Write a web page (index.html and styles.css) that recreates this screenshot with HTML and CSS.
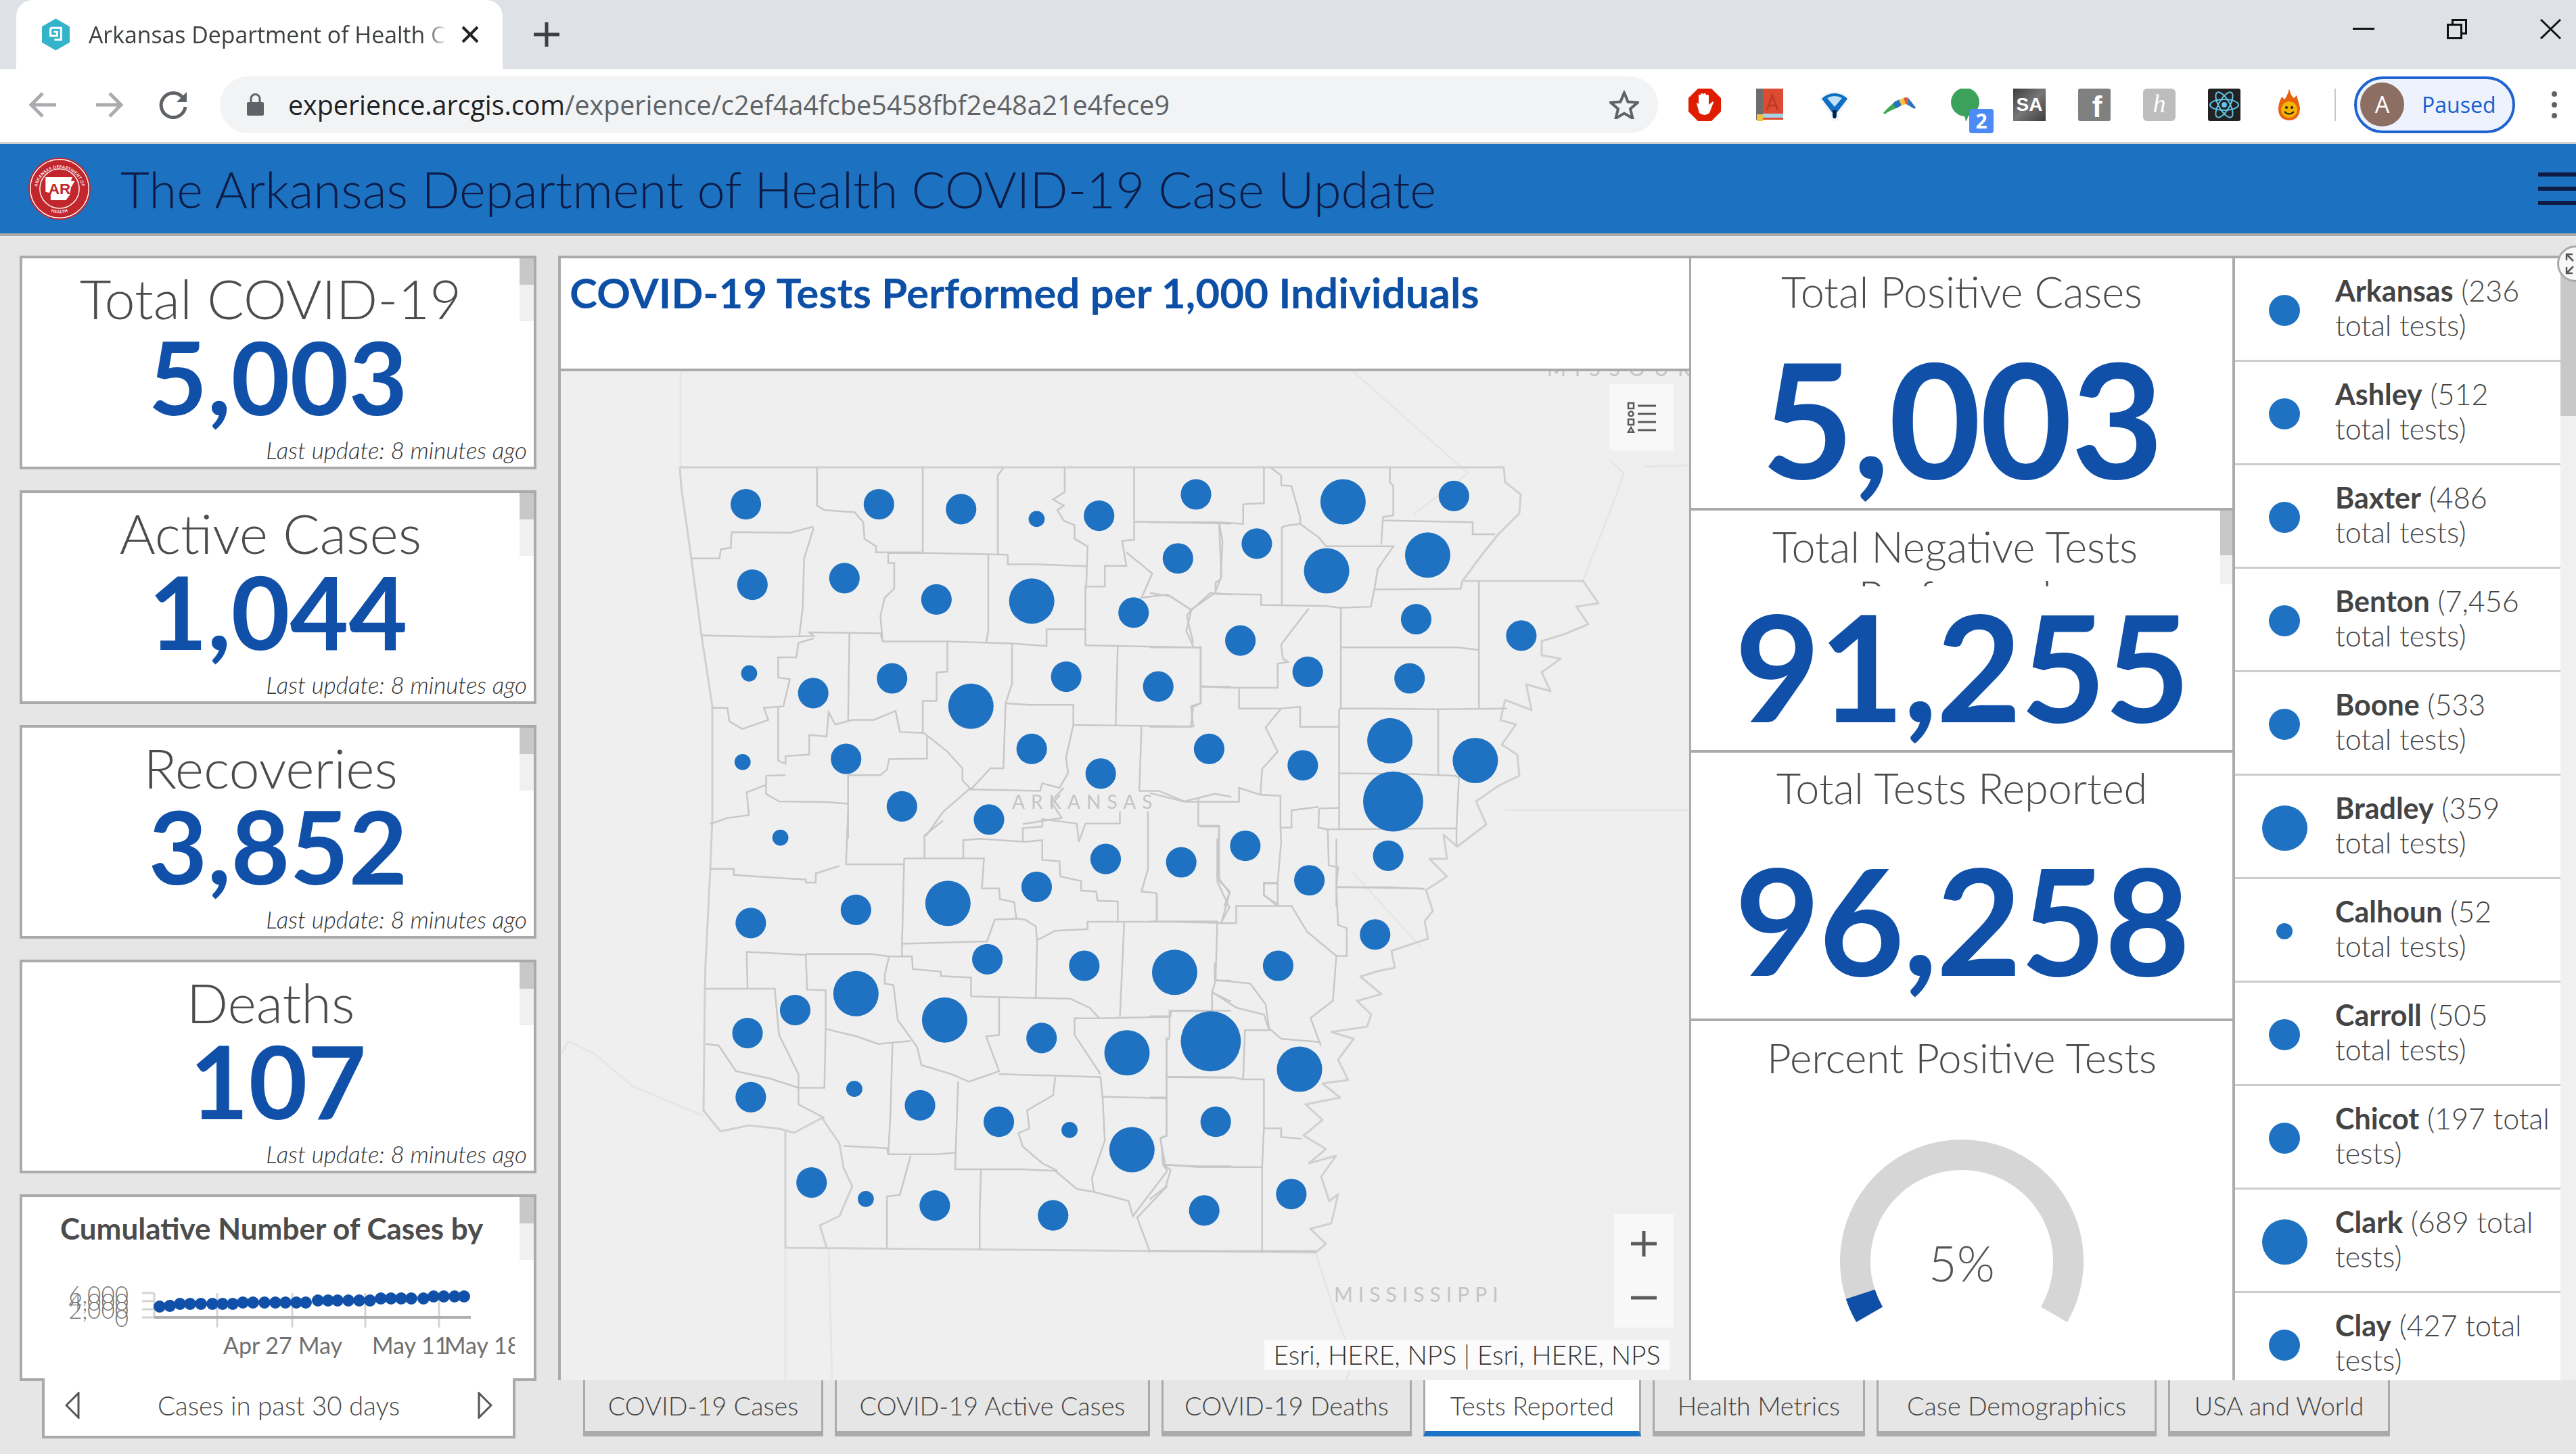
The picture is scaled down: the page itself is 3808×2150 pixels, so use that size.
FILE: index.html
```html
<!DOCTYPE html>
<html lang="en">
<head>
    <meta charset="UTF-8">
    <title>Arkansas Department of Health COVID-19</title>
    <link rel="stylesheet" href="styles.css">
</head>
<body>
    <!-- browser tab strip -->
    <div class="tabstrip">
        <div class="browser-tab">
            <svg class="favicon" viewBox="0 0 44 48"><path d="M22 0 L43 12 V36 L22 48 L1 36 V12 Z" fill="#35b3c9"/><path d="M14 14 H30 V32 H20 M14 14 V26 H24 V20 H19" fill="none" stroke="#fff" stroke-width="3"/></svg>
            <span class="tab-title">Arkansas Department of Health COVID-19</span>
            <svg class="tab-close" viewBox="0 0 28 26"><path d="M3 2 L25 24 M25 2 L3 24" stroke="#202124" stroke-width="4"/></svg>
        </div>
        <svg class="new-tab" viewBox="0 0 38 36"><path d="M19 0 V36 M0 18 H38" stroke="#3c4043" stroke-width="5"/></svg>
        <div class="window-btns">
            <svg class="win-min" viewBox="0 0 32 4"><rect width="32" height="3" fill="#111"/></svg>
            <svg class="win-restore" viewBox="0 0 30 30"><path d="M1.5 8.5 H21.5 V28.5 H1.5 Z M8.5 8 V1.5 H28.5 V21.5 H22" fill="none" stroke="#111" stroke-width="3"/></svg>
            <svg class="win-close" viewBox="0 0 31 30"><path d="M1 1 L30 29 M30 1 L1 29" stroke="#111" stroke-width="3"/></svg>
        </div>
    </div>

    <!-- browser toolbar -->
    <div class="toolbar">
        <svg class="nav-btn back" viewBox="0 0 42 42"><path d="M40 21 H4 M20 4 L3 21 L20 38" fill="none" stroke="#a9abae" stroke-width="5"/></svg>
        <svg class="nav-btn forward" viewBox="0 0 42 42"><path d="M2 21 H38 M22 4 L39 21 L22 38" fill="none" stroke="#a9abae" stroke-width="5"/></svg>
        <svg class="nav-btn reload" viewBox="0 0 46 42"><path d="M36 10 A18 18 0 1 0 40 24" fill="none" stroke="#5f6368" stroke-width="5"/><path d="M42 2 V17 H27 Z" fill="#5f6368"/></svg>
        <div class="omnibox">
            <svg class="lock" viewBox="0 0 25 33"><path d="M6 14 V8 A6.5 6.5 0 0 1 19 8 V14" fill="none" stroke="#5f6368" stroke-width="3"/><rect y="13" width="25" height="20" rx="2" fill="#5f6368"/></svg>
            <span class="url"><b>experience.arcgis.com</b>/experience/c2ef4a4fcbe5458fbf2e48a21e4fece9</span>
            <svg class="star" viewBox="0 0 44 42"><path d="M22 3 L27.500 16.500 L42 17.500 L31 27 L34.500 41 L22 33.500 L9.500 41 L13 27 L2 17.500 L16.500 16.500 Z" fill="none" stroke="#5f6368" stroke-width="4"/></svg>
        </div>
        <div class="extensions">
            <svg class="ext" viewBox="0 0 48 48"><path d="M14 0 H34 L48 14 V34 L34 48 H14 L0 34 V14 Z" fill="#e01c00"/><path d="M16 36 L12 22 Q13 20 15 23 V10 Q17 8 18 10 V8 Q20 6 22 8 V8 Q24 6 26 8 V10 Q28 8 30 10 V24 L36 19 Q38 20 36 23 L31 36 Q24 42 16 36 Z" fill="#fff"/></svg>
            <svg class="ext" viewBox="0 0 48 48"><rect x="4" y="0" width="40" height="46" fill="#dd4b32"/><rect x="4" y="0" width="10" height="46" fill="#6d6d6d"/><path d="M20 32 L28 10 L36 32 M23 25 H33" fill="none" stroke="#c03a26" stroke-width="3"/><rect x="14" y="37" width="30" height="6" fill="#a6d4e6"/><rect x="5" y="38" width="9" height="10" fill="#f0c040"/></svg>
            <svg class="ext" viewBox="0 0 48 48"><path d="M24 48 Q16 48 18 38 L1 15 Q10 4 24 4 Q38 4 47 15 L30 38 Q32 48 24 48 Z" fill="#f4f4f4"/><path d="M24 44 Q20 44 21 36 L5 15 Q13 7 24 7 Q35 7 43 15 L27 36 Q28 44 24 44 Z" fill="#0f6fc4"/><path d="M13 14 Q24 8 35 14 L24 27 Z" fill="#bfe3f5"/><path d="M21 32 H27 L26 44 H22 Z" fill="#08203f"/></svg>
            <svg class="ext" viewBox="0 0 48 48"><path d="M0 36 Q10 24 18 20 L22 28 Q10 32 2 38 Z" fill="#3fa757"/><path d="M14 22 Q18 18 24 16 L27 25 L19 29 Z" fill="#2a72bd"/><path d="M23 17 L30 14 L33 23 L27 25 Z" fill="#f5c33b"/><path d="M30 14 Q34 12 37 14 L36 24 L33 23 Z" fill="#df5a3a"/><path d="M37 14 L48 28 L46 30 L36 24 Z" fill="#2a72bd"/></svg>
            <div class="ext chat-ext">
                <svg viewBox="0 0 48 48"><circle cx="25" cy="20" r="21" fill="#3ba15b"/><path d="M23 36 H31 L27 48 H26 Z" fill="#3ba15b"/></svg>
                <span class="ext-badge">2</span>
            </div>
            <span class="ext ext-sa">SA</span>
            <span class="ext ext-fb">f</span>
            <span class="ext ext-h">h</span>
            <svg class="ext" viewBox="0 0 48 48"><rect width="48" height="48" rx="3" fill="#222"/><g fill="none" stroke="#61c3e8" stroke-width="2"><ellipse cx="24" cy="24" rx="21" ry="8"/><ellipse cx="24" cy="24" rx="21" ry="8" transform="rotate(60 24 24)"/><ellipse cx="24" cy="24" rx="21" ry="8" transform="rotate(120 24 24)"/></g><circle cx="24" cy="24" r="4" fill="#61c3e8"/></svg>
            <svg class="ext" viewBox="0 0 48 48"><path d="M24 0 Q26 10 31 14 L35 10 Q38 20 40 28 Q40 46 24 47 Q8 46 8 30 Q8 22 13 12 L17 16 Q22 10 24 0 Z" fill="#e8620e"/><circle cx="24" cy="31" r="12" fill="#f5b400"/><circle cx="20" cy="28" r="2" fill="#222"/><circle cx="28" cy="28" r="2" fill="#222"/><path d="M17 34 Q24 41 31 34" fill="none" stroke="#222" stroke-width="2"/></svg>
        </div>
        <div class="toolbar-sep"></div>
        <div class="profile">
            <span class="avatar">A</span>
            <span>Paused</span>
        </div>
        <div class="kebab"><i></i><i></i><i></i></div>
    </div>

    <!-- app header -->
    <header class="app-header">
        <svg class="seal" viewBox="0 0 100 100">
            <circle cx="50" cy="50" r="49" fill="#c1272d"/>
            <circle cx="50" cy="50" r="46" fill="none" stroke="#fff" stroke-width="1.500"/>
            <circle cx="50" cy="50" r="31" fill="none" stroke="#fff" stroke-width="1.500"/>
            <path id="sealArc" d="M14 54 A36 36 0 0 1 86 54" fill="none"/>
            <text class="seal-text"><textPath href="#sealArc" startOffset="50%" text-anchor="middle">ARKANSAS DEPARTMENT OF</textPath></text>
            <path id="sealArcLow" d="M28 82 A40 40 0 0 0 72 82" fill="none"/>
            <text class="seal-text"><textPath href="#sealArcLow" startOffset="50%" text-anchor="middle">HEALTH</textPath></text>
            <path d="M28 32 H70 L68 38 H74 L68 48 L66 60 L60 68 H36 V57 L28 55 Z" fill="#fff"/>
            <text class="seal-ar" x="50" y="58" text-anchor="middle">AR</text>
        </svg>
        <h1>The Arkansas Department of Health COVID-19 Case Update</h1>
        <div class="hamburger"><i></i><i></i><i></i></div>
    </header>

    <div class="dashboard">
        <!-- left counters -->
        <div class="left-col">
            <div class="stat-card">
                <div class="mini-scroll"></div>
                <div class="stat-title">Total COVID-19</div>
                <div class="stat-num">5,003</div>
                <div class="stat-update">Last update: 8 minutes ago</div>
            </div>
            <div class="stat-card">
                <div class="mini-scroll"></div>
                <div class="stat-title">Active Cases</div>
                <div class="stat-num">1,044</div>
                <div class="stat-update">Last update: 8 minutes ago</div>
            </div>
            <div class="stat-card">
                <div class="mini-scroll"></div>
                <div class="stat-title">Recoveries</div>
                <div class="stat-num">3,852</div>
                <div class="stat-update">Last update: 8 minutes ago</div>
            </div>
            <div class="stat-card">
                <div class="mini-scroll"></div>
                <div class="stat-title">Deaths</div>
                <div class="stat-num">107</div>
                <div class="stat-update">Last update: 8 minutes ago</div>
            </div>
            <div class="chart-block">
                <div class="chart-card">
                    <div class="mini-scroll"></div>
                    <div class="chart-title">Cumulative Number of Cases by</div>
                    <svg class="chart" viewBox="0 0 728 190">
                        <g class="chart-grid">
                            <path d="M288 71 V122 M399 71 V122 M507 71 V122 M616 71 V122"/>
                            <path d="M177 71 H195 M177 83 H195 M177 95 H195 M177 107 H195 M195 71 V107"/>
                        </g>
                        <path class="chart-axis" d="M195 107 H663"/>
                        <g class="chart-y">
                            <text x="157" y="86" text-anchor="end">6,000</text>
                            <text x="157" y="97" text-anchor="end">4,000</text>
                            <text x="157" y="109" text-anchor="end">2,000</text>
                            <text x="157" y="121" text-anchor="end">0</text>
                        </g>
                        <g class="chart-dots">
                            <circle cx="203" cy="91" r="9"/><circle cx="218" cy="90" r="9"/><circle cx="233" cy="87" r="9"/><circle cx="248" cy="87" r="9"/><circle cx="264" cy="87" r="9"/>
                            <circle cx="281" cy="87" r="9"/><circle cx="296" cy="87" r="9"/><circle cx="311" cy="87" r="9"/><circle cx="326" cy="85" r="9"/><circle cx="341" cy="85" r="9"/>
                            <circle cx="358" cy="85" r="9"/><circle cx="374" cy="85" r="9"/><circle cx="389" cy="85" r="9"/><circle cx="405" cy="85" r="9"/><circle cx="419" cy="85" r="9"/>
                            <circle cx="437" cy="82" r="9"/><circle cx="452" cy="82" r="9"/><circle cx="466" cy="82" r="9"/><circle cx="482" cy="82" r="9"/><circle cx="498" cy="82" r="9"/>
                            <circle cx="514" cy="82" r="9"/><circle cx="530" cy="79" r="9"/><circle cx="545" cy="79" r="9"/><circle cx="560" cy="79" r="9"/><circle cx="575" cy="79" r="9"/>
                            <circle cx="593" cy="79" r="9"/><circle cx="608" cy="76" r="9"/><circle cx="623" cy="76" r="9"/><circle cx="639" cy="76" r="9"/><circle cx="653" cy="76" r="9"/>
                        </g>
                        <g class="chart-x">
                            <text x="297" y="161">Apr 27</text>
                            <text x="408" y="161" font-weight="700">May</text>
                            <text x="517" y="161">May 11</text>
                            <text x="624" y="161">May 18</text>
                        </g>
                    </svg>
                </div>
                <div class="chart-nav">
                    <svg class="chart-arrow" viewBox="0 0 22 40"><path d="M20 2 L2 20 L20 38 Z" fill="none" stroke="#555" stroke-width="3"/></svg>
                    <span>Cases in past 30 days</span>
                    <svg class="chart-arrow" viewBox="0 0 22 40"><path d="M2 2 L20 20 L2 38 Z" fill="none" stroke="#555" stroke-width="3"/></svg>
                </div>
            </div>
        </div>

        <div class="center">
            <div class="panels">
                <!-- map -->
                <section class="map-panel">
                    <div class="map-title"><h2>COVID-19 Tests Performed per 1,000 Individuals</h2></div>
                    <div class="map-view">
                        <svg class="map-svg" viewBox="829 549 1668 1492">
                            <g class="faint">
                                <path d="M1006 549 V691"/>
                                <path d="M829 1560 L840 1540 L877 1557 L935 1606 L1040 1650"/>
                                <path d="M2000 549 L2170 700 L2090 760 M2000 1290 L2100 1400"/>
                                <path d="M2225 1198 H2497 M2430 690 L2497 688"/>
                                <path d="M1161 1845 V2041 M1225 1845 L1230 2041"/>
                                <path d="M1945 1852 L1960 1900 L1975 1945 L2000 2010 L1990 2041"/>
                                <path d="M2380 680 L2400 700 L2390 730 L2340 859"/>
                            </g>
                            <path class="border-line" d="M1005 691 H2223 L2225 713 L2248 731 L2246 759 L2215 790 L2190 821 L2162 859 H2340 L2363 892 L2330 897 L2348 923 L2312 938 L2279 948 L2279 969 L2307 974 L2279 994 L2292 1022 L2256 1012 L2264 1050 L2225 1035 L2218 1065 L2241 1071 L2220 1101 L2243 1116 L2246 1147 L2215 1162 L2182 1185 L2197 1219 L2154 1252 L2134 1234 L2139 1270 L2113 1270 L2139 1296 L2108 1316 L2118 1347 L2106 1362 L2111 1388 L2057 1406 L2062 1431 L2037 1436 L2011 1444 L2042 1470 L2006 1480 L2027 1500 L2021 1518 L1968 1526 L2001 1536 L1978 1567 L1993 1597 L1955 1602 L1981 1623 L1930 1633 L1955 1656 L1927 1679 L1960 1699 L1935 1720 L1975 1709 L1953 1740 L1965 1776 L1978 1766 L1968 1809 L1937 1817 L1960 1839 L1945 1852 L1161 1845 V1673"/>
                            <path class="border-line" d="M1005 691 L1007 720 L1022 826 L1037 940 L1053 1044 V1210 L1050 1285 L1043 1423 L1042 1463 L1040 1642 L1065 1673 L1107 1664 L1152 1669 L1174 1675 L1215 1653 L1241 1691 L1247 1727 L1260 1754 L1241 1798 L1212 1812 L1222 1845"/>
                            <!-- county lines, west half, top -->
                            <g class="county" transform="translate(820 540) scale(.6378 .4464)">
                                <path d="M608 340 V465 L625 480 L695 487 L715 520 L718 575 L745 600 V620 H850"/>
                                <path d="M853 340 V620 M1040 340 L1027 365 V627"/>
                                <path d="M1182 340 V420 L1155 445 L1180 465 L1165 480 L1180 515 L1205 530 V575 L1235 600 L1232 730"/>
                                <path d="M1343 340 V518 L1568 525 M1343 518 V578 L1315 582 L1325 665 H1275 V733 H1230 V928"/>
                                <path d="M1050 628 V660 H1115 L1235 666 M1005 628 V880 L1000 920 M773 622 H870 L1050 628"/>
                                <path d="M773 622 V655 H787 V740 L765 770 L755 830 L760 915 H910 L1060 922 L1140 930 V875 H1230"/>
                                <path d="M600 535 L545 555 L410 553 L408 605 L385 610 L382 640 H316 M600 540 L578 640 L575 800 L567 895"/>
                                <path d="M340 895 L500 900 L600 897 L590 885 L755 888 L760 915"/>
                                <path d="M600 905 L565 920 L560 968 H518 V1035 L545 1040 L530 1130 L485 1135 L495 1175 L435 1205 L405 1180 L400 1135 H365"/>
                                <path d="M683 890 L680 1180 M518 1130 V1310 L535 1320 V1295 L590 1290 V1225 L630 1230 L635 1150 L650 1190 L690 1175 H740 L790 1145 L800 1215 L855 1218 L910 1280 L945 1335 V1375 L965 1405 L1010 1335 H1040 L1045 1120 L1060 1055 V922"/>
                                <path d="M910 915 V1015 L885 1018 V1112 H853 V1218 M863 1230 V1303 L775 1305 L770 1340 L755 1358 H680 V1568"/>
                                <path d="M1045 1120 L1100 1125 H1202 V1192 L1185 1300 L1190 1350 L1170 1400 L1130 1385 L1125 1410 L960 1405 L900 1480 L860 1560"/>
                                <path d="M1202 1192 L1480 1197 L1475 1130 L1497 1120 V930 M1305 930 L1300 1192 M1230 928 L1497 935"/>
                                <path d="M1360 1195 L1355 1410 H1400 L1460 1445 L1530 1420 L1568 1430 M1480 920 L1465 830 L1475 810 L1420 760 L1360 770 L1385 690 L1325 620"/>
                                <path d="M1475 810 L1530 755 L1568 760 M1540 525 L1545 700 L1530 755 M1497 1065 H1568"/>
                                <path d="M1180 1400 L1150 1445 L1175 1500 L1130 1510 L1085 1520 M490 1360 L535 1358 M490 1360 V1420 L520 1445 L630 1447 L680 1453 M490 1390 L445 1415 L450 1490 L400 1500 L360 1520"/>
                            </g>
                            <!-- county lines, west half, bottom -->
                            <g class="county" transform="translate(820 1200) scale(.6378 .4464)">
                                <path d="M680 0 L675 175 H810 M360 190 H415 V210 L540 222 L582 225 V235 H605 V205 L660 180"/>
                                <path d="M810 155 L805 440 V478 M810 155 H995 L990 255 H1030 L1032 290 L1065 300 L1070 355 L1020 358 L1002 430 L805 438"/>
                                <path d="M857 155 V80 L900 30 M947 155 V95 L985 90 L1090 100 L1130 95 V160 L1170 165 L1172 215 L1220 230 V262 L1255 265 L1258 295 L1305 298 V365 H1235 V390 L1160 395 L1120 425"/>
                                <path d="M1085 100 V55 L1130 50 V25 L1210 40 L1215 100 L1230 40 H1310 V0 M1320 365 L1310 680 M1070 355 L1090 358 L1115 380 L1118 425 L1115 620"/>
                                <path d="M1305 365 H1430 L1568 370 M1375 0 V190 L1360 265 L1395 270 V365 M1495 50 H1540 V230 L1565 265 L1545 370"/>
                                <path d="M965 612 L1030 615 L1195 620 L1240 650 L1262 685 H1205 V740 L1265 870 M1030 615 V740 L1000 745 L1030 860 L960 895 L920 870 L850 840 L840 780 L795 690 L785 575 L765 570 V540 L775 480 H828 L830 522 L895 530 V545 L965 550 V612"/>
                                <path d="M348 587 H510 L520 740 L565 870 V915 H625 L628 720 V592 L585 590 L582 475 L445 465 L447 587 M582 472 H735 L775 480 M628 720 L700 745 L750 770 L825 760"/>
                                <path d="M783 765 L778 1010 L773 1135 H885 L930 1130 M350 770 L380 775 L420 860 L500 885 L565 915 V970 L625 1015"/>
                                <path d="M935 895 L928 1185 H1080 L1160 1190 L1210 1250 L1250 1260 L1330 1290 L1340 1340 L1420 1190 M1030 870 L1160 875 L1265 880 L1270 950 L1275 1090 L1245 1215 L1250 1260"/>
                                <path d="M1160 880 L1155 940 L1095 990 L1100 1050 L1075 1065 L1085 1110 L1130 1165 L1165 1190 M1270 945 L1418 950 V760 L1425 750 V660 H1568 M1262 685 L1425 680 M1418 760 V1075 L1405 1080 L1410 1170 L1420 1190"/>
                                <path d="M1418 880 L1568 882 M1410 1170 L1490 1175 H1568 M1525 600 L1568 630 M1530 560 H1568 M1530 500 V560"/>
                                <path d="M670 1108 L770 1115 L773 1135 M825 1140 L800 1270 L770 1275 V1445 M988 1185 L985 1330 V1450 M1380 1460 L1350 1345 L1420 1240"/>
                            </g>
                            <!-- county lines, east half -->
                            <g class="county" transform="translate(1700 540) scale(.5102)">
                                <path d="M330 297 V400 L270 403 V460 L200 455 H0 M350 297 L380 320 V348 L410 350 L435 440 V460 L395 465 L382 470 V695"/>
                                <path d="M435 460 L490 500 L510 525 H705 L660 590 L650 650 L640 700 L550 703 L510 698 L322 695 V665 L190 663 L175 660 L120 710 L60 670 L0 660"/>
                                <path d="M200 455 L210 510 L205 620 L190 630 V663 M695 297 V340 L705 350 V435 L675 440 L670 520 M675 450 L935 455 V490 H1000 M650 650 L900 648 L905 625"/>
                                <path d="M953 625 V995 M553 703 V995 L548 1000 V1345 M553 818 H890 L953 825 M548 995 H620 L835 997 L1035 995 M835 997 V1190"/>
                                <path d="M548 1183 L760 1185 L885 1190 L895 1195 L888 1340 V1395 M548 1283 L490 1285 L488 1340 L515 1345 L888 1342 M515 1345 L518 1450 L545 1455 L540 1515 V1568 M540 1513 H700 L795 1518"/>
                                <path d="M120 710 L105 770 L125 815 V820 M0 818 H147 V980 L125 990 L118 1048 H0 M147 930 L225 935 H370 V865 L400 860 L385 850 L380 810 L410 770 L460 705"/>
                                <path d="M258 938 V995 H380 L435 990 V1048 H548 M380 995 L335 1050 L370 1120 L325 1170 L320 1245 L258 1225 V1265 H100 L0 1240 M320 1245 L378 1248 V1340 L380 1380 L370 1500 H330 V1535 L370 1568"/>
                                <path d="M140 1258 V1335 H200 L195 1480 L230 1530 L215 1568 M378 1340 H410 V1290 L488 1280 M488 1340 L510 1345"/>
                            </g>
                            <g class="county" transform="translate(1700 1240) scale(.5102)">
                                <path d="M540 0 V140 L545 250 L570 260 V340 H540 L530 470 L465 520 L495 600 M540 140 L795 145 M0 240 H195 L190 410 L290 420 L335 480 L345 550 L380 580 L495 590"/>
                                <path d="M195 245 H250 V195 H410 L455 270 L540 340 M205 245 L230 200 L195 125 V0 M20 160 V240 M330 130 H370 V195 M330 130 V165 L370 190"/>
                                <path d="M60 500 V515 H0 M60 500 H180 V445 L250 490 L330 510 L345 555 H275 L270 695 M48 575 V690 L240 692 L270 698 H330 V840 L325 950 V1200"/>
                                <path d="M330 840 H380 V865 L440 870 M48 695 V860 L30 870 L45 950 L60 960 L45 1010 L0 1045 M45 945 L140 952 H325 M0 750 H48"/>
                                <path d="M190 410 L180 445 M0 1195 H480"/>
                            </g>
                            <text class="map-label label-mo" x="2287" y="556">MISSOURI</text>
                            <text class="map-label label-ar" x="1496" y="1196">ARKANSAS</text>
                            <text class="map-label label-ms" x="1972" y="1925">MISSISSIPPI</text>
                            <g class="dots" transform="scale(2.4286)">
                                <circle cx="454" cy="307" r="9.300"/><circle cx="535" cy="307" r="9.300"/><circle cx="585" cy="310" r="9.300"/><circle cx="631" cy="316" r="4.900"/><circle cx="669" cy="314" r="9.300"/><circle cx="728" cy="301" r="9.300"/><circle cx="817.500" cy="305.500" r="13.800"/><circle cx="885" cy="302" r="9.300"/>
                                <circle cx="458" cy="356" r="9.300"/><circle cx="514" cy="352" r="9.300"/><circle cx="570" cy="365" r="9.300"/><circle cx="628" cy="366" r="13.800"/><circle cx="690" cy="373" r="9.300"/><circle cx="717" cy="340" r="9.300"/><circle cx="765" cy="331" r="9.300"/><circle cx="807.500" cy="347.500" r="13.800"/><circle cx="869" cy="338" r="13.800"/>
                                <circle cx="862" cy="377" r="9.300"/><circle cx="926" cy="387" r="9.300"/><circle cx="755" cy="390" r="9.300"/><circle cx="796" cy="409" r="9.300"/><circle cx="858" cy="413" r="9.300"/><circle cx="705" cy="418" r="9.300"/><circle cx="649" cy="412" r="9.300"/><circle cx="591" cy="430" r="13.800"/><circle cx="543" cy="413" r="9.300"/><circle cx="495" cy="422" r="9.300"/><circle cx="456" cy="410" r="4.900"/>
                                <circle cx="452" cy="464" r="4.900"/><circle cx="515" cy="462" r="9.300"/><circle cx="628" cy="456" r="9.300"/><circle cx="670" cy="471" r="9.300"/><circle cx="736" cy="456" r="9.300"/><circle cx="793" cy="466" r="9.300"/><circle cx="846" cy="451" r="13.800"/><circle cx="898" cy="463" r="13.800"/><circle cx="848" cy="488" r="18.300"/>
                                <circle cx="549" cy="491" r="9.300"/><circle cx="602" cy="499" r="9.300"/><circle cx="475" cy="510" r="4.900"/><circle cx="673" cy="523" r="9.300"/><circle cx="719" cy="525" r="9.300"/><circle cx="758" cy="515" r="9.300"/><circle cx="845" cy="521" r="9.300"/><circle cx="797" cy="536" r="9.300"/><circle cx="631" cy="540" r="9.300"/>
                                <circle cx="577" cy="550" r="13.800"/><circle cx="521" cy="554" r="9.300"/><circle cx="457" cy="562" r="9.300"/><circle cx="837" cy="569" r="9.300"/><circle cx="601" cy="584" r="9.300"/><circle cx="660" cy="588" r="9.300"/><circle cx="715" cy="592" r="13.800"/><circle cx="778" cy="588" r="9.300"/>
                                <circle cx="521" cy="605" r="13.800"/><circle cx="484" cy="615" r="9.300"/><circle cx="455" cy="629" r="9.300"/><circle cx="575" cy="621" r="13.800"/><circle cx="634" cy="632" r="9.300"/><circle cx="686" cy="641" r="13.800"/><circle cx="737" cy="634" r="18.300"/><circle cx="791" cy="651" r="13.800"/>
                                <circle cx="457" cy="668" r="9.300"/><circle cx="520" cy="663" r="4.900"/><circle cx="560" cy="673" r="9.300"/><circle cx="608" cy="683" r="9.300"/><circle cx="651" cy="688" r="4.900"/><circle cx="740" cy="683" r="9.300"/><circle cx="689" cy="700" r="13.800"/>
                                <circle cx="494" cy="720" r="9.300"/><circle cx="527" cy="730" r="4.900"/><circle cx="569" cy="734" r="9.300"/><circle cx="641" cy="740" r="9.300"/><circle cx="733" cy="737" r="9.300"/><circle cx="786" cy="727" r="9.300"/>
                            </g>
                        </svg>
                        <div class="map-legend-btn">
                            <svg viewBox="0 0 44 46"><path d="M2 2 H10 V10 H2 Z M2 26 H10 V34 H2 Z" fill="none" stroke="#5a5a5a" stroke-width="2.500"/><circle cx="6" cy="18" r="3.500" fill="none" stroke="#5a5a5a" stroke-width="2.500"/><path d="M6 38 L10 45 H2 Z" fill="none" stroke="#5a5a5a" stroke-width="2.500"/><path d="M16 6 H43 M16 18 H43 M16 30 H43 M16 42 H43" stroke="#5a5a5a" stroke-width="3"/></svg>
                        </div>
                        <div class="map-zoom">
                            <svg viewBox="0 0 38 38"><path d="M19 0 V38 M0 19 H38" stroke="#5a5a5a" stroke-width="5"/></svg>
                            <svg viewBox="0 0 38 38"><path d="M0 19 H38" stroke="#5a5a5a" stroke-width="5"/></svg>
                        </div>
                        <div class="map-attr">Esri, HERE, NPS | Esri, HERE, NPS</div>
                    </div>
                </section>

                <!-- big numbers -->
                <section class="stats-col">
                    <div class="big-stat big-positive">
                        <div class="big-title">Total Positive Cases</div>
                        <div class="big-num">5,003</div>
                    </div>
                    <div class="big-stat big-negative">
                        <div class="big-clip">
                            <div class="big-title">Total Negative Tests<br><span class="big-wrapped">Performed</span></div>
                        </div>
                        <div class="mini-scroll big-scroll"></div>
                        <div class="big-num">91,255</div>
                    </div>
                    <div class="big-stat big-reported">
                        <div class="big-title">Total Tests Reported</div>
                        <div class="big-num">96,258</div>
                    </div>
                    <div class="big-stat big-percent">
                        <div class="big-title">Percent Positive Tests</div>
                        <div class="gauge">
                            <svg viewBox="-200 -200 400 300">
                                <path class="gauge-track" d="M-149.800 48.700 A157.500 157.500 0 1 1 136.400 78.750"/>
                                <path class="gauge-value" d="M-136.400 78.750 A157.500 157.500 0 0 1 -149.800 48.700"/>
                            </svg>
                            <span class="gauge-label">5%</span>
                        </div>
                    </div>
                </section>

                <!-- county list -->
                <section class="county-list">
                    <div class="county-item"><span class="county-dot"></span><div><b>Arkansas</b> (236<br>total tests)</div></div>
                    <div class="county-item"><span class="county-dot"></span><div><b>Ashley</b> (512<br>total tests)</div></div>
                    <div class="county-item"><span class="county-dot"></span><div><b>Baxter</b> (486<br>total tests)</div></div>
                    <div class="county-item"><span class="county-dot"></span><div><b>Benton</b> (7,456<br>total tests)</div></div>
                    <div class="county-item"><span class="county-dot"></span><div><b>Boone</b> (533<br>total tests)</div></div>
                    <div class="county-item"><span class="county-dot dot-lg"></span><div><b>Bradley</b> (359<br>total tests)</div></div>
                    <div class="county-item"><span class="county-dot dot-sm"></span><div><b>Calhoun</b> (52<br>total tests)</div></div>
                    <div class="county-item"><span class="county-dot"></span><div><b>Carroll</b> (505<br>total tests)</div></div>
                    <div class="county-item"><span class="county-dot"></span><div><b>Chicot</b> (197 total<br>tests)</div></div>
                    <div class="county-item"><span class="county-dot dot-lg"></span><div><b>Clark</b> (689 total<br>tests)</div></div>
                    <div class="county-item"><span class="county-dot"></span><div><b>Clay</b> (427 total<br>tests)</div></div>
                </section>
                <div class="page-scroll"><div class="page-thumb"></div></div>
            </div>

            <nav class="view-tabs">
                <a class="view-tab">COVID-19 Cases</a>
                <a class="view-tab">COVID-19 Active Cases</a>
                <a class="view-tab">COVID-19 Deaths</a>
                <a class="view-tab active">Tests Reported</a>
                <a class="view-tab">Health Metrics</a>
                <a class="view-tab">Case Demographics</a>
                <a class="view-tab">USA and World</a>
            </nav>
        </div>

        <div class="expand-btn">
            <svg viewBox="0 0 24 34"><path d="M3 12 V3 H12 M3 3 L13 13 M3 22 V31 H12 M3 31 L13 21" fill="none" stroke="#555" stroke-width="2.500"/></svg>
        </div>
    </div>
</body>
</html>
```

FILE: styles.css
```css
* { box-sizing: border-box; }
html, body { margin: 0; padding: 0; }
body { width: 3808px; height: 2150px; overflow: hidden; background: #e6e6e6; font-family: Lato, "Open Sans", sans-serif; color: #4c4c4c; }

/* browser chrome */
.tabstrip { height: 102px; background: #dee1e6; display: flex; align-items: center; position: relative; }
.browser-tab { width: 719px; height: 102px; margin-left: 24px; background: #fff; border-radius: 24px 24px 0 0; display: flex; align-items: center; padding-left: 37px; }
.favicon { width: 43px; height: 48px; flex: none; }
.tab-title { width: 530px; margin-left: 27px; font-family: "Open Sans", sans-serif; font-size: 33.800px; color: #3c4043; white-space: nowrap; overflow: hidden; -webkit-mask-image: linear-gradient(90deg, #000 94%, transparent 100%); mask-image: linear-gradient(90deg, #000 94%, transparent 100%); }
.tab-close { width: 28px; height: 26px; margin-left: 20px; flex: none; }
.new-tab { width: 38px; height: 36px; margin-left: 46px; }
.window-btns { margin-left: auto; display: flex; align-items: center; height: 58px; align-self: flex-start; margin-top: 14px; padding-right: 22px; }
.win-min { width: 32px; height: 4px; margin-right: 107px; }
.win-restore { width: 30px; height: 30px; margin-right: 108px; }
.win-close { width: 31px; height: 30px; }

.toolbar { height: 111px; background: #fff; border-bottom: 3px solid #d2d2d2; display: flex; align-items: center; padding-bottom: 3px; }
.nav-btn { height: 42px; flex: none; }
.nav-btn.back { width: 42px; margin-left: 43px; }
.nav-btn.forward { width: 42px; margin-left: 55px; }
.nav-btn.reload { width: 46px; margin-left: 52px; }
.omnibox { width: 2126px; height: 84px; margin-left: 45px; border-radius: 42px; background: #f1f3f4; display: flex; align-items: center; padding-left: 40px; flex: none; }
.lock { width: 25px; height: 33px; flex: none; }
.url { margin-left: 36px; font-family: "Open Sans", sans-serif; font-size: 39.400px; color: #5f6368; white-space: nowrap; }
.url b { font-weight: 400; color: #202124; }
.star { width: 44px; height: 42px; margin-left: auto; margin-right: 28px; }
.extensions { display: flex; align-items: center; margin-left: 45px; gap: 48px; flex: none; }
.ext { width: 48px; height: 48px; flex: none; display: block; }
.chat-ext { position: relative; }
.chat-ext svg { width: 48px; height: 48px; display: block; }
.ext-badge { position: absolute; left: 31px; top: 30px; width: 36px; height: 36px; background: #4c8bf5; border-radius: 4px; color: #fff; font: 700 30px/36px "Open Sans", sans-serif; text-align: center; }
.ext-sa, .ext-fb, .ext-h { text-align: center; color: #fff; font-family: "Liberation Sans", sans-serif; font-weight: 700; }
.ext-sa { background: linear-gradient(135deg, #3c3c3c, #777 50%, #3c3c3c); font-size: 28px; line-height: 48px; }
.ext-fb { background: #808080; font-size: 44px; line-height: 54px; padding-left: 8px; border-radius: 3px; }
.ext-h { background: #bdbdbd; font-family: "Liberation Serif", serif; font-style: italic; font-weight: 400; font-size: 38px; line-height: 44px; border-radius: 6px; }
.toolbar-sep { width: 2px; height: 48px; background: #c8c8c8; margin-left: 43px; flex: none; }
.profile { width: 238px; height: 84px; margin-left: 27px; border: 4px solid #1f63d0; border-radius: 42px; background: #edf2fc; display: flex; align-items: center; padding-left: 5px; color: #1a5fd0; font-family: "Open Sans", sans-serif; font-size: 32px; flex: none; }
.avatar { width: 65px; height: 65px; border-radius: 50%; background: #8d6e63; color: #fff; text-align: center; line-height: 65px; margin-right: 26px; font-size: 34px; }
.kebab { display: flex; flex-direction: column; gap: 8px; margin-left: 54px; }
.kebab i { width: 8px; height: 8px; border-radius: 50%; background: #5f6368; display: block; }

/* app header */
.app-header { height: 136px; background: #1c71c0; border-bottom: 4px solid #aaa; display: flex; align-items: center; padding-left: 41px; color: #0d1b45; }
.seal { width: 94px; height: 94px; flex: none; }
.seal-text { font: 700 6.500px Lato, sans-serif; fill: #fff; letter-spacing: .4px; }
.seal-ar { font: 700 24px "Liberation Sans", sans-serif; fill: #c1272d; }
.app-header h1 { margin: 0 0 0 43px; font-size: 74.200px; font-weight: 300; white-space: nowrap; }
.hamburger { margin-left: auto; display: flex; flex-direction: column; gap: 15px; }
.hamburger i { width: 56px; height: 6px; background: #0d1b45; display: block; }

/* layout */
.dashboard { height: 1801px; display: flex; padding: 29px 0 0 29px; position: relative; }
.left-col { width: 764px; margin-right: 32px; display: flex; flex-direction: column; gap: 31px; flex: none; }
.center { width: 2983px; flex: none; }
.panels { height: 1663px; display: flex; }

/* left counters */
.stat-card { height: 316px; border: 4px solid #aaa; background: #fff; position: relative; text-align: center; flex: none; }
.mini-scroll { position: absolute; right: 0; top: 0; width: 21px; height: 93px; background: linear-gradient(#c8c8c8 0 39px, #f0f0f0 39px); }
.stat-title { font-size: 81px; font-weight: 300; line-height: 80px; padding: 19px 22px 0 0; white-space: nowrap; }
.stat-num { font-size: 150px; font-weight: 700; line-height: 132px; padding-top: 9px; color: #1050a8; }
.stat-update { position: absolute; right: 10px; bottom: 3px; font-size: 35px; font-style: italic; font-weight: 300; line-height: 44px; color: #333; }

.chart-block { position: relative; }
.chart-card { height: 276px; border: 4px solid #aaa; background: #fff; position: relative; }
.chart-title { font-size: 44px; font-weight: 700; line-height: 50px; padding: 21px 0 0 56px; white-space: nowrap; }
.chart { width: 728px; height: 190px; display: block; overflow: hidden; }
.chart-grid path { stroke: #d4d4d4; stroke-width: 3; fill: none; }
.chart-axis { stroke: #b0b0b0; stroke-width: 4; fill: none; }
.chart-y text { font-size: 35px; font-weight: 300; fill: #777; }
.chart-dots circle { fill: #1050a8; }
.chart-x text { font-size: 34px; font-weight: 400; fill: #707070; }
.chart-nav { height: 89px; margin: -4px 31px 0 33px; background: #fff; border: 4px solid #aaa; border-top: 0; position: relative; display: flex; align-items: center; justify-content: space-between; padding: 0 30px 5px; font-size: 38.500px; font-weight: 300; color: #444; }
.chart-arrow { width: 22px; height: 40px; flex: none; }

/* map */
.map-panel { width: 1672px; flex: none; border-left: 4px solid #aaa; }
.map-title { height: 171px; background: #fff; border-top: 4px solid #aaa; border-bottom: 4px solid #aaa; padding: 15px 0 0 13px; }
.map-title h2 { margin: 0; color: #0c4fa5; font-size: 62px; font-weight: 700; line-height: 70px; white-space: nowrap; }
.map-view { position: relative; height: 1492px; background: #efefef; overflow: hidden; }
.map-svg { width: 1668px; height: 1492px; display: block; }
.faint path { fill: none; stroke: #e6e6e6; stroke-width: 3; }
.border-line { fill: none; stroke: #d0d0d0; stroke-width: 3; stroke-linejoin: round; }
.county path { fill: none; stroke: #c8c8c8; stroke-width: 2.500; vector-effect: non-scaling-stroke; }
.dots circle { fill: #1f72c1; }
.map-label { fill: #c4c4c4; font-size: 30px; }
.label-mo { letter-spacing: 13px; }
.label-ar { font-size: 28px; letter-spacing: 9px; }
.label-ms { letter-spacing: 8px; }
.map-legend-btn { position: absolute; top: 19px; right: 23px; width: 95px; height: 98px; background: #f8f8f8; display: flex; align-items: center; justify-content: center; }
.map-legend-btn svg { width: 44px; height: 46px; }
.map-zoom { position: absolute; top: 1246px; right: 23px; width: 88px; height: 168px; background: #f8f8f8; display: flex; flex-direction: column; align-items: center; justify-content: space-around; padding: 4px 0; }
.map-zoom svg { width: 38px; height: 38px; }
.map-attr { position: absolute; top: 1432px; left: 1040px; width: 599px; height: 45px; background: rgba(255, 255, 255, .75); text-align: center; font-size: 39px; font-weight: 300; line-height: 45px; color: #333; white-space: nowrap; }

/* big numbers */
.stats-col { width: 803px; flex: none; background: #fff; border-top: 4px solid #aaa; border-left: 3px solid #aaa; display: flex; flex-direction: column; text-align: center; }
.big-stat { border-bottom: 4px solid #aaa; position: relative; }
.big-title { font-size: 63px; font-weight: 300; line-height: 80px; white-space: nowrap; }
.big-num { color: #1050a8; font-weight: 700; font-size: 236px; line-height: 220px; letter-spacing: -2px; }
.big-positive { height: 373px; padding-top: 9px; }
.big-positive .big-num { margin-top: 36px; }
.big-negative { height: 358px; padding-top: 13px; }
.big-clip { height: 99px; overflow: hidden; }
.big-negative .big-title { padding-right: 20px; }
.big-wrapped { position: relative; top: -7px; }
.big-negative .big-num, .big-reported .big-num { font-size: 218px; }
.big-negative .big-num { line-height: 200px; margin-top: 17px; }
.big-scroll { width: 18px; height: 109px; background: linear-gradient(#c8c8c8 0 66px, #f0f0f0 66px); }
.big-reported { height: 397px; padding-top: 12px; }
.big-reported .big-num { line-height: 200px; margin-top: 54px; }
.big-percent { flex: 1; padding-top: 13px; border-bottom: 0; }
.big-percent .big-title { font-size: 62px; }
.gauge { position: relative; width: 400px; height: 300px; margin: 62px auto 0; }
.gauge svg { width: 400px; height: 300px; display: block; }
.gauge-track { fill: none; stroke: #d6d6d6; stroke-width: 45; }
.gauge-value { fill: none; stroke: #0f4fa8; stroke-width: 45; }
.gauge-label { position: absolute; left: 0; right: 0; top: 157px; font-size: 72px; font-weight: 300; line-height: 90px; color: #555; }

/* county list */
.county-list { width: 485px; flex: none; background: #fff; border-top: 4px solid #aaa; border-left: 4px solid #aaa; overflow: hidden; }
.county-item { height: 153px; border-bottom: 3px solid #ccc; display: flex; align-items: center; font-size: 43px; font-weight: 300; line-height: 51px; white-space: nowrap; color: #444; }
.county-item > div { margin-top: -4px; }
.county-dot { width: 46px; height: 46px; margin: 4px 52px 0 50px; border-radius: 50%; background: #1f72c1; flex: none; position: relative; }
.dot-lg { width: 67px; height: 67px; margin: 4px 41px 0 40px; }
.dot-sm { width: 24px; height: 24px; margin: 4px 63px 0 61px; }
.county-item b { font-weight: 700; }
.page-scroll { width: 23px; flex: none; background: #f0f0f0; }
.page-thumb { height: 237px; background: #c8c8c8; }

/* bottom tabs */
.view-tabs { display: grid; grid-template-columns: 355px 466px 370px 322px 314px 414px 328px; column-gap: 17px; padding-left: 37px; height: 83px; }
.view-tab { height: 83px; background: #e6e6e6; border: 3px solid #aaa; border-top: 0; border-bottom-width: 8px; font-size: 37.800px; font-weight: 300; line-height: 75px; text-align: center; color: #444; white-space: nowrap; }
.view-tab.active { background: #fff; border-bottom-color: #1d74c4; }

.expand-btn { position: absolute; left: 3780px; top: 14px; width: 54px; height: 54px; border: 3px solid #aaa; border-radius: 50%; background: #f8f8f8; display: flex; align-items: center; padding-left: 8px; }
.expand-btn svg { width: 24px; height: 34px; }
```
